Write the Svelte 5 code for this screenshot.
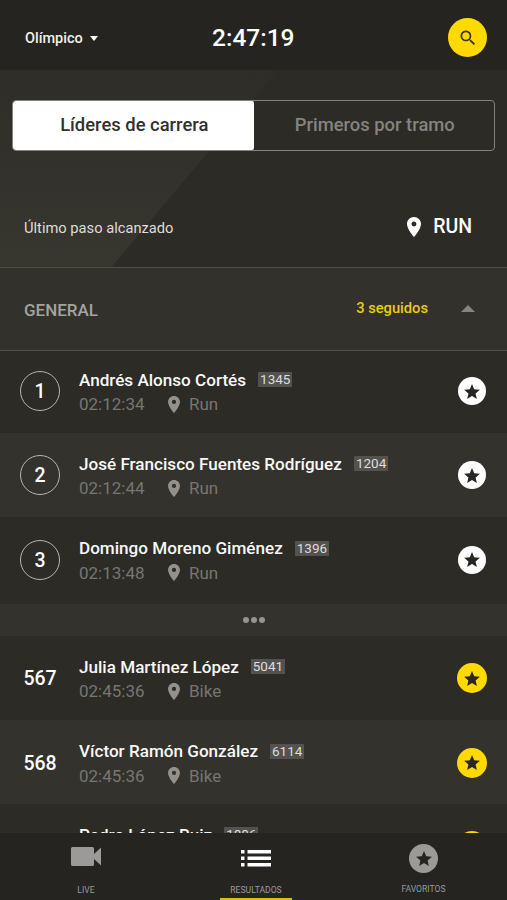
<script>
	let tab = "leaders";
	let open = true;

	const leaders = [
		{ pos: 1, name: "Andrés Alonso Cortés", bib: 1345, time: "02:12:34", leg: "Run" },
		{ pos: 2, name: "José Francisco Fuentes Rodríguez", bib: 1204, time: "02:12:44", leg: "Run" },
		{ pos: 3, name: "Domingo Moreno Giménez", bib: 1396, time: "02:13:48", leg: "Run" },
	];
	let followed = [
		{ pos: 567, name: "Julia Martínez López", bib: 5041, time: "02:45:36", leg: "Bike", fav: true },
		{ pos: 568, name: "Víctor Ramón González", bib: 6114, time: "02:45:36", leg: "Bike", fav: true },
		{ pos: 569, name: "Pedro López Ruiz", bib: 1886, time: "02:45:40", leg: "Bike", fav: true },
	];

	const star =
		"M12 17.27 18.18 21l-1.64-7.03L22 9.24l-7.19-.61L12 2 9.19 8.63 2 9.24l5.46 4.73L5.82 21z";
	const pin =
		"M12 2C8.13 2 5 5.13 5 9c0 5.25 7 13 7 13s7-7.75 7-13c0-3.87-3.13-7-7-7zm0 9.5a2.5 2.5 0 0 1 0-5 2.5 2.5 0 0 1 0 5z";
</script>

{#snippet row(r)}
	<li class="row">
		<div class="pos" class:ring={r.pos < 4}>{r.pos}</div>
		<div class="info">
			<div class="name"><b>{r.name}</b><span class="bib">{r.bib}</span></div>
			<div class="meta">
				<span class="time">{r.time}</span>
				<svg class="pin" viewBox="5 2 14 20"><path d={pin} /></svg>
				<span>{r.leg}</span>
			</div>
		</div>
		<button class="star" class:fav={r.fav} aria-label="Favorito">
			<svg viewBox="2 2 20 19"><path d={star} /></svg>
		</button>
	</li>
{/snippet}

<main>
	<header>
		<button class="race">Olímpico <i class="down"></i></button>
		<h1>2:47:19</h1>
		<button class="search" aria-label="Buscar">
			<svg viewBox="0 0 24 24">
				<path
					d="M15.5 14h-.79l-.28-.27A6.47 6.47 0 0 0 16 9.5 6.5 6.5 0 1 0 9.5 16c1.61 0 3.09-.59 4.23-1.57l.27.28v.79l5 4.99L20.49 19l-4.99-5zm-6 0C7.01 14 5 11.99 5 9.5S7.01 5 9.5 5 14 7.01 14 9.5 11.99 14 9.5 14z"
				/>
			</svg>
		</button>
	</header>

	<section class="hero">
		<div class="tabs">
			<button class:active={tab === "leaders"} on:click={() => (tab = "leaders")}>Líderes de carrera</button>
			<button class:active={tab === "legs"} on:click={() => (tab = "legs")}>Primeros por tramo</button>
		</div>
		<div class="last">
			<span>Último paso alcanzado</span>
			<strong><svg viewBox="5 2 14 20"><path d={pin} /></svg>RUN</strong>
		</div>
	</section>

	<button class="group" on:click={() => (open = !open)}>
		<span class="title">GENERAL</span>
		<span class="count">3 seguidos</span>
		<i class="up"></i>
	</button>

	{#if open}
		<ul class="leaders">
			{#each leaders as r}
				{@render row(r)}
			{/each}
		</ul>
		<div class="more"><i></i><i></i><i></i></div>
		<ul class="followed">
			{#each followed as r}
				{@render row(r)}
			{/each}
		</ul>
	{/if}

	<nav>
		<a href="#live">
			<svg class="cam" viewBox="0 0 30 19">
				<path d="M1.5 0H21.5Q23 0 23 1.5V7L30 .5V18.5L23 12V17.5Q23 19 21.5 19H1.5Q0 19 0 17.5V1.5Q0 0 1.5 0z" />
			</svg>
			<span>LIVE</span>
		</a>
		<a href="#results" class="current">
			<svg class="list" viewBox="0 0 30 17">
				<path d="M0 0h3.5v3.5H0zM6.5 0H30v3.5H6.5zM0 6.5h3.5V10H0zM6.5 6.5H30V10H6.5zM0 13h3.5v3.5H0zM6.5 13H30v3.5H6.5z" />
			</svg>
			<span>RESULTADOS</span>
		</a>
		<a href="#favs">
			<div class="badge"><svg viewBox="2 2 20 19"><path d={star} /></svg></div>
			<span>FAVORITOS</span>
		</a>
	</nav>
</main>

<style>
	:global(body) {
		background: #2c2b26;
	}

	main {
		height: 900px;
		display: flex;
		flex-direction: column;
		overflow: hidden;
		color: #fff;
		font-family: Roboto, "Liberation Sans", sans-serif;
		font-weight: 500;
	}

	button {
		border: none;
		padding: 0;
		background: none;
		color: inherit;
		font: inherit;
	}

	svg {
		display: block;
		fill: currentColor;
	}

	header {
		flex: none;
		height: 70px;
		padding: 0 20px 0 25px;
		box-sizing: border-box;
		display: grid;
		grid-template-columns: 187px auto 1fr;
		align-items: center;
		background: #252420;
	}

	.race {
		justify-self: start;
		display: flex;
		align-items: center;
		gap: 7px;
		margin-top: 7px;
		font-size: 14.5px;
		color: #f0f0ee;
	}

	.down {
		border: 4.5px solid transparent;
		border-top: 5px solid #fff;
		border-bottom: 0;
	}

	h1 {
		margin: 6px 0 0;
		font-size: 24.5px;
		line-height: 28px;
		font-weight: 500;
	}

	.search {
		justify-self: end;
		width: 39px;
		height: 39px;
		margin-top: 5px;
		border-radius: 50%;
		background: #ffd900;
		color: #35321c;
		display: grid;
		place-items: center;
	}

	.search svg {
		width: 20px;
		height: 20px;
	}

	.hero {
		flex: none;
		height: 197px;
		padding: 30px 12px 0;
		box-sizing: border-box;
		background:
			linear-gradient(to bottom right, transparent 50%, #2c2b26 50.2%) 111px 0 / 166px 197px no-repeat,
			linear-gradient(#2c2b26, #2c2b26) 277px 0 / 300px 197px no-repeat,
			linear-gradient(#2e2d28, #37362f);
	}

	.tabs {
		display: flex;
		height: 51px;
		box-sizing: border-box;
		border: 1.5px solid #83827e;
		border-radius: 4px;
		overflow: hidden;
	}

	.tabs button {
		width: 50%;
		padding: 0 0 3px 2px;
		font-size: 18.4px;
		color: #85847f;
	}

	.tabs .active {
		background: #fff;
		color: #32312e;
		border-radius: 2px;
	}

	.last {
		display: flex;
		align-items: center;
		justify-content: space-between;
		margin: 60px 23px 0 12px;
		font-size: 14.7px;
		font-weight: 400;
		line-height: 28px;
		color: #deddda;
	}

	.last span {
		padding-top: 3px;
	}

	.last strong {
		display: flex;
		align-items: center;
		gap: 12px;
		font-size: 19.5px;
		font-weight: 500;
		color: #fff;
	}

	.last svg {
		width: 14px;
		height: 20px;
	}

	.group {
		flex: none;
		display: flex;
		align-items: center;
		height: 84px;
		padding: 0 32px 0 24px;
		border: solid #504f4b;
		border-width: 1px 0;
		background: #32312c;
	}

	.title {
		flex: 1;
		padding-top: 1px;
		text-align: left;
		font-size: 17px;
		color: #a4a39f;
	}

	.count {
		font-size: 14.7px;
		color: #edca16;
		margin: -3px 33px 0 0;
	}

	.up {
		margin-top: -2px;
		border: 7px solid transparent;
		border-bottom: 7px solid #85847f;
		border-top: 0;
	}

	ul {
		flex: none;
		margin: 0;
		padding: 0;
		list-style: none;
	}

	.row {
		height: 84px;
		box-sizing: border-box;
		padding: 0 20px;
		display: flex;
		align-items: center;
		background: #2c2b26;
	}

	.row:nth-child(even) {
		background: #33322d;
	}

	.leaders .row:first-child {
		height: 82px;
		padding-bottom: 2px;
	}

	.leaders .row:last-child {
		height: 87px;
		padding-bottom: 2px;
	}

	.followed .row:nth-child(2) {
		padding-top: 1px;
	}

	.pos {
		width: 40px;
		height: 40px;
		line-height: 42px;
		box-sizing: border-box;
		margin-right: 19px;
		text-align: center;
		font-size: 19.5px;
	}

	.ring {
		line-height: 40px;
		border: 1.5px solid #b5b4b0;
		border-radius: 50%;
	}

	.info {
		flex: 1;
		padding-top: 2px;
	}

	.name {
		display: flex;
		align-items: center;
		height: 24px;
		font-size: 17.1px;
		color: #f8f8f6;
	}

	.name b {
		font-weight: 500;
	}

	.bib {
		margin: 0 0 0 12px;
		padding: 0 2px;
		font-size: 13.5px;
		line-height: 15px;
		font-weight: 400;
		color: #deddda;
		background: #53524f;
	}

	.meta {
		display: flex;
		align-items: center;
		height: 25px;
		font-size: 17px;
		font-weight: 400;
		color: #777672;
	}

	.time {
		width: 89px;
	}

	.pin {
		width: 12px;
		height: 17px;
		margin-right: 9px;
		color: #92918d;
	}

	.star {
		width: 28px;
		height: 28px;
		margin-right: 1px;
		border-radius: 50%;
		background: #fff;
		color: #282724;
		display: grid;
		place-items: center;
	}

	.star svg,
	.badge svg {
		width: 16px;
		height: 15px;
	}

	.fav {
		width: 30px;
		height: 30px;
		margin-right: 0;
		background: #ffd900;
	}

	.more {
		flex: none;
		height: 32px;
		display: flex;
		align-items: center;
		justify-content: center;
		gap: 2px;
		background: #33322d;
	}

	.more i {
		width: 6px;
		height: 6px;
		border-radius: 50%;
		background: #95948f;
	}

	.followed {
		flex: 1;
		min-height: 0;
		overflow: hidden;
	}

	nav {
		flex: none;
		height: 67px;
		display: grid;
		grid-template-columns: 172px 168px 1fr;
		background: #252420;
	}

	nav a {
		display: flex;
		flex-direction: column;
		align-items: center;
		justify-content: space-between;
		width: 72px;
		margin: 0 auto;
		padding: 14px 0 2px;
		box-sizing: border-box;
		border-bottom: 2px solid transparent;
		font-size: 8.6px;
		line-height: 12px;
		font-weight: 400;
		text-decoration: none;
		color: #9b9a98;
	}

	nav .current {
		padding-top: 17px;
		border-color: #dfbf09;
	}

	.current svg {
		color: #fff;
	}

	nav a:last-child {
		padding: 11px 0 3px;
	}

	.cam {
		width: 30px;
		height: 19px;
	}

	.list {
		width: 30px;
		height: 17px;
	}

	.badge {
		width: 29px;
		height: 29px;
		border-radius: 50%;
		background: #9b9a98;
		color: #252420;
		display: grid;
		place-items: center;
	}
</style>
